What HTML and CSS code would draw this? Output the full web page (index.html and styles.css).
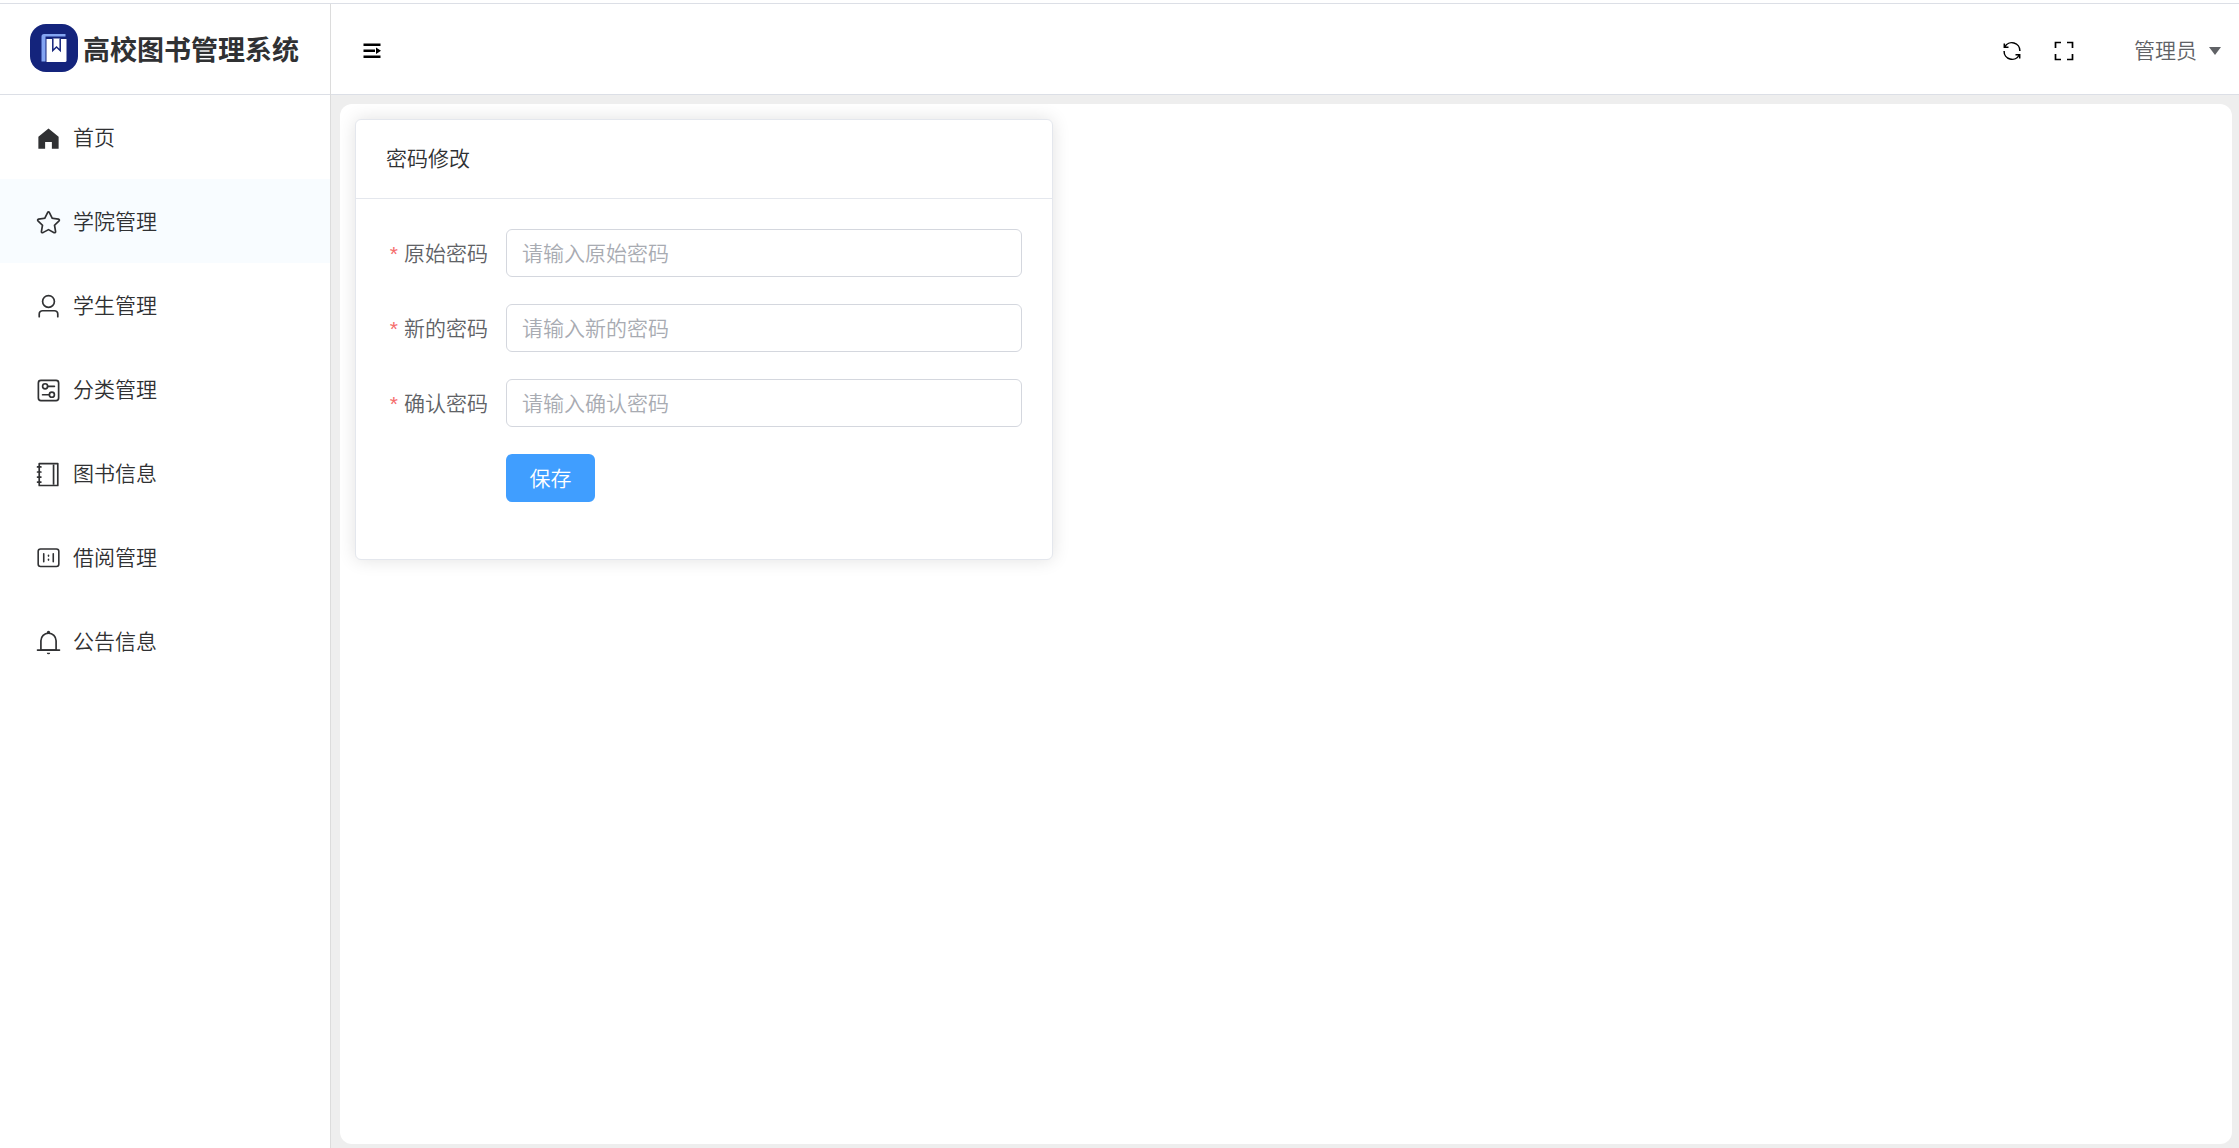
FILE: index.html
```html
<!DOCTYPE html>
<html lang="zh-CN">
<head>
<meta charset="utf-8">
<meta name="viewport" content="width=device-width, initial-scale=1">
<title>高校图书管理系统</title>
<link rel="stylesheet" href="styles.css">
</head>
<body>
<div class="layout">
  <aside class="sidebar">
    <div class="brand">
      <svg class="brand-logo" viewBox="0 0 48 48" aria-hidden="true">
        <rect width="48" height="48" rx="16" fill="#14247c"/>
        <path d="M11.500 37.500V12.500a2.500 2.500 0 0 1 2.500-2.500H35.500v2.500H15.500V37.500z" fill="#84a5f2"/>
        <path d="M16.500 15H36.500V36.500a1.500 1.500 0 0 1-1.500 1.500H16.500z" fill="#fff"/>
        <path d="M22.800 14.500v12l3.700-3.500 3.700 3.500v-12" fill="#fff" stroke="#14247c" stroke-width="1.500"/>
      </svg>
      <h1 class="brand-name">高校图书管理系统</h1>
    </div>
    <nav class="menu">
      <a class="menu-item" href="#home">
        <svg class="menu-icon" viewBox="0 0 1024 1024"><path d="M512 128 128 447.936V896h255.936V640H640v256h255.936V447.936z"/></svg>
        <span class="menu-text">首页</span>
      </a>
      <a class="menu-item is-hover" href="#college">
        <svg class="menu-icon" viewBox="0 0 1024 1024"><path d="m512 747.840 228.160 119.936a6.400 6.400 0 0 0 9.280-6.720l-43.520-254.080 184.512-179.904a6.400 6.400 0 0 0-3.520-10.880l-255.104-37.120L517.760 147.904a6.400 6.400 0 0 0-11.520 0L392.192 379.072l-255.104 37.120a6.400 6.400 0 0 0-3.520 10.880L318.080 606.976l-43.584 254.080a6.400 6.400 0 0 0 9.280 6.720zM313.600 924.480a70.400 70.400 0 0 1-102.144-74.240l37.888-220.928L88.960 472.960A70.400 70.400 0 0 1 128 352.896l221.760-32.256 99.200-200.960a70.400 70.400 0 0 1 126.208 0l99.200 200.960 221.824 32.256a70.400 70.400 0 0 1 39.040 120.064L774.720 629.376l37.888 220.928a70.400 70.400 0 0 1-102.144 74.240L512 820.096l-198.400 104.320z"/></svg>
        <span class="menu-text">学院管理</span>
      </a>
      <a class="menu-item" href="#student">
        <svg class="menu-icon" viewBox="0 0 1024 1024"><path d="M512 512a192 192 0 1 0 0-384 192 192 0 0 0 0 384m0 64a256 256 0 1 1 0-512 256 256 0 0 1 0 512m320 320v-96a96 96 0 0 0-96-96H288a96 96 0 0 0-96 96v96a32 32 0 1 1-64 0v-96a160 160 0 0 1 160-160h448a160 160 0 0 1 160 160v96a32 32 0 1 1-64 0"/></svg>
        <span class="menu-text">学生管理</span>
      </a>
      <a class="menu-item" href="#category">
        <svg class="menu-icon" viewBox="0 0 1024 1024"><path d="M224 160a64 64 0 0 0-64 64v576a64 64 0 0 0 64 64h576a64 64 0 0 0 64-64V224a64 64 0 0 0-64-64zm0-64h576a128 128 0 0 1 128 128v576a128 128 0 0 1-128 128H224A128 128 0 0 1 96 800V224A128 128 0 0 1 224 96"/><path d="M384 416a64 64 0 1 0 0-128 64 64 0 0 0 0 128m0 64a128 128 0 1 1 0-256 128 128 0 0 1 0 256"/><path d="M480 320h256q32 0 32 32t-32 32H480q-32 0-32-32t32-32m160 416a64 64 0 1 0 0-128 64 64 0 0 0 0 128m0 64a128 128 0 1 1 0-256 128 128 0 0 1 0 256"/><path d="M288 640h256q32 0 32 32t-32 32H288q-32 0-32-32t32-32"/></svg>
        <span class="menu-text">分类管理</span>
      </a>
      <a class="menu-item" href="#book">
        <svg class="menu-icon" viewBox="0 0 1024 1024"><path d="M192 128v768h640V128zm-32-64h704a32 32 0 0 1 32 32v832a32 32 0 0 1-32 32H160a32 32 0 0 1-32-32V96a32 32 0 0 1 32-32"/><path d="M672 128h64v768h-64zM96 192h128q32 0 32 32t-32 32H96q-32 0-32-32t32-32m0 192h128q32 0 32 32t-32 32H96q-32 0-32-32t32-32m0 192h128q32 0 32 32t-32 32H96q-32 0-32-32t32-32m0 192h128q32 0 32 32t-32 32H96q-32 0-32-32t32-32"/></svg>
        <span class="menu-text">图书信息</span>
      </a>
      <a class="menu-item" href="#borrow">
        <svg class="menu-icon" viewBox="0 0 1024 1024"><path d="M813.176 180.706a60.235 60.235 0 0 1 60.236 60.235v481.883a60.235 60.235 0 0 1-60.236 60.235H210.824a60.235 60.235 0 0 1-60.236-60.235V240.940a60.235 60.235 0 0 1 60.236-60.235h602.352zm0-60.235H210.824A120.470 120.470 0 0 0 90.353 240.940v481.883a120.470 120.470 0 0 0 120.470 120.470h602.353a120.470 120.470 0 0 0 120.471-120.470V240.940a120.470 120.470 0 0 0-120.470-120.470zm-120.470 180.705a30.118 30.118 0 0 0-30.118 30.118v301.177a30.118 30.118 0 0 0 60.236 0V331.294a30.118 30.118 0 0 0-30.118-30.118m-361.412 0a30.118 30.118 0 0 0-30.118 30.118v301.177a30.118 30.118 0 1 0 60.236 0V331.294a30.118 30.118 0 0 0-30.118-30.118M512 361.412a30.118 30.118 0 0 0-30.118 30.117v30.118a30.118 30.118 0 0 0 60.236 0V391.530A30.118 30.118 0 0 0 512 361.412M512 512a30.118 30.118 0 0 0-30.118 30.118v30.117a30.118 30.118 0 0 0 60.236 0v-30.117A30.118 30.118 0 0 0 512 512"/></svg>
        <span class="menu-text">借阅管理</span>
      </a>
      <a class="menu-item" href="#notice">
        <svg class="menu-icon" viewBox="0 0 1024 1024"><path d="M512 64a64 64 0 0 1 64 64v64H448v-64a64 64 0 0 1 64-64"/><path d="M256 768h512V448a256 256 0 1 0-512 0zm256-640a320 320 0 0 1 320 320v384H192V448a320 320 0 0 1 320-320"/><path d="M96 768h832q32 0 32 32t-32 32H96q-32 0-32-32t32-32m352 128h128a64 64 0 0 1-128 0"/></svg>
        <span class="menu-text">公告信息</span>
      </a>
    </nav>
  </aside>

  <div class="content">
    <header class="topbar">
      <button class="icon-button" type="button" aria-label="折叠菜单">
        <svg class="tool-icon" viewBox="0 0 24 24"><path d="M3.500 4.500h17v2.500h-17zM3.500 10.500h11.500v2.500H3.500zM3.500 16.500h17v2.500h-17zM16 8.500l5 3.300-5 3.300z"/></svg>
      </button>
      <div class="tools">
        <button class="icon-button" type="button" aria-label="刷新">
          <svg class="tool-icon" viewBox="0 0 24 24" fill="none" stroke="#000" stroke-width="1.500"><path d="M4.800 8A8 8 0 0 1 19.900 12M4.300 4.500V8.300h4.200M19.200 16A8 8 0 0 1 4.100 12M19.700 19.500V15.700h-4.200"/></svg>
        </button>
        <button class="icon-button" type="button" aria-label="全屏">
          <svg class="tool-icon" viewBox="0 0 24 24" fill="none" stroke="#000" stroke-width="1.700"><path d="M3.500 9V3.500H9M15 3.500h5.500V9M20.500 15v5.500H15M9 20.500H3.500V15"/></svg>
        </button>
        <button class="user" type="button">
          <span class="user-name">管理员</span>
          <svg class="caret" viewBox="0 0 12 8"><path d="M0 0h12L6 8z"/></svg>
        </button>
      </div>
    </header>

    <main class="main">
      <div class="panel">
        <section class="card">
          <h2 class="card-header">密码修改</h2>
          <form class="form">
            <div class="field">
              <label class="label" for="old-password">原始密码</label>
              <input class="input" id="old-password" type="password" placeholder="请输入原始密码">
            </div>
            <div class="field">
              <label class="label" for="new-password">新的密码</label>
              <input class="input" id="new-password" type="password" placeholder="请输入新的密码">
            </div>
            <div class="field">
              <label class="label" for="confirm-password">确认密码</label>
              <input class="input" id="confirm-password" type="password" placeholder="请输入确认密码">
            </div>
            <div class="actions">
              <button class="save" type="button">保存</button>
            </div>
          </form>
        </section>
      </div>
    </main>
  </div>
</div>
</body>
</html>
```
FILE: styles.css
```css
* {
  box-sizing: border-box;
}

body {
  margin: 0;
  padding-top: 3px;
  background: #fff;
  color: #303133;
  font-family: "Noto Sans CJK SC", sans-serif;
  font-size: 21px;
  font-weight: 350;
}

button,
input {
  font: inherit;
}

.layout {
  display: flex;
  min-height: calc(100vh - 3px);
  border-top: 1px solid #dcdfe6;
}

/* Sidebar */
.sidebar {
  flex: none;
  width: 331px;
  border-right: 1px solid #dcdcdc;
}

.brand {
  display: flex;
  align-items: center;
  gap: 5px;
  height: 91px;
  padding: 0 30px 2px;
  border-bottom: 1px solid #dcdfe6;
}

.brand-logo {
  flex: none;
  width: 48px;
  height: 48px;
}

.brand-name {
  margin: 0;
  font-size: 27px;
  font-weight: 700;
  white-space: nowrap;
}

.menu-item {
  display: flex;
  align-items: center;
  gap: 11px;
  height: 84px;
  padding: 2px 35px 0;
  color: #303133;
  text-decoration: none;
}

.menu-item.is-hover,
.menu-item:hover {
  background: #f8fcff;
}

.menu-icon {
  width: 27px;
  height: 27px;
  fill: #303133;
}

.menu-text,
.user-name {
  padding-bottom: 4px;
}

/* Top bar */
.content {
  display: flex;
  flex: 1;
  flex-direction: column;
  min-width: 0;
}

.topbar {
  display: flex;
  align-items: center;
  justify-content: space-between;
  height: 91px;
  padding: 3px 18px 0 29px;
  border-bottom: 1px solid #dcdfe6;
}

.tools {
  display: flex;
  align-items: center;
  gap: 28px;
}

.icon-button,
.user {
  display: flex;
  align-items: center;
  padding: 0;
  border: 0;
  background: none;
}

.tool-icon {
  width: 24px;
  height: 24px;
}

.user {
  gap: 12px;
  margin-left: 30px;
  color: #606266;
}

.caret {
  width: 12px;
  height: 8px;
  fill: #606266;
}

/* Page */
.main {
  display: flex;
  flex: 1;
  padding: 9px 7px 4px 9px;
  background: #eee;
}

.panel {
  flex: 1;
  padding: 15px;
  overflow: hidden;
  border-radius: 12px;
  background: #fff;
}

.card {
  width: 37.5%;
  border: 1px solid #e4e7ed;
  border-radius: 6px;
  background: #fff;
  box-shadow: 0 0 18px rgba(0, 0, 0, 0.12);
}

.card-header {
  margin: 0;
  padding: 22px 30px 26px;
  border-bottom: 1px solid #e4e7ed;
  font-size: 21px;
  font-weight: 350;
  line-height: 30px;
}

.form {
  display: flex;
  flex-direction: column;
  gap: 27px;
  padding: 30px 30px 57px;
}

.field {
  display: flex;
}

.label {
  flex: none;
  width: 120px;
  padding-right: 18px;
  color: #606266;
  line-height: 46px;
  text-align: right;
}

.label::before {
  margin-right: 6px;
  color: #f56c6c;
  font-family: "Liberation Sans", sans-serif;
  content: "*";
}

.input {
  flex: 1;
  min-width: 0;
  height: 48px;
  padding: 0 15px 2px;
  border: 1px solid #d4d7de;
  border-radius: 6px;
  outline: 0;
  background: #fff;
  color: #606266;
}

.input::placeholder {
  color: #a8abb2;
}

.actions {
  padding-left: 120px;
}

.save {
  width: 89px;
  height: 48px;
  padding: 0 0 2px;
  border: 0;
  border-radius: 6px;
  background: #409eff;
  color: #fff;
}
```
